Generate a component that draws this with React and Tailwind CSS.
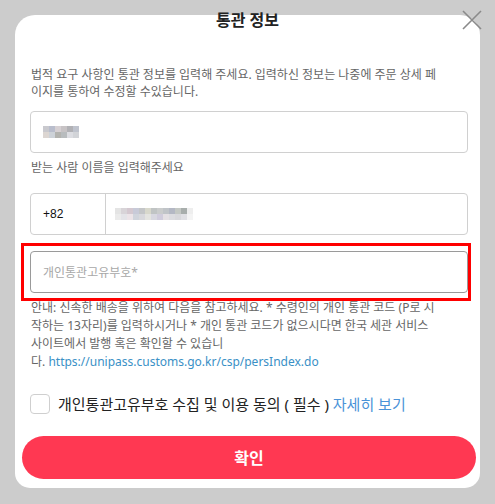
import React from 'react';

const nameBlur = [
  ['#c9c9ce', '#b9bdcc', '#d6d0d3', '#c7c3c5', '#b1b1b5', '#bfc3cd'],
  ['#dcd6d2', '#cdd2d8', '#b3b3af', '#b8bcbe', '#dcdde2', '#d2d4d8'],
];

const phoneBlur = [
  ['#e4e4e4', '#d8d4d8', '#d4c8d0', '#c8cad8', '#c4c6c8', '#d8d8cc', '#c0c4c4', '#cacccc', '#c0c4c8', '#b4b8c4', '#c4c8c4', '#a8aeac', '#eeeeee'],
  ['#ebebeb', '#e4e4e8', '#ece4e8', '#d0d4dc', '#d8d8dc', '#e4e4e0', '#d8d8e0', '#d0ccdc', '#e4e0e4', '#dcdce0', '#d8d8dc', '#e0e0e4', '#f4f4f4'],
];

function Blur({ rows }) {
  return (
    <div className="flex flex-col">
      {rows.map((row, i) => (
        <div key={i} className="flex">
          {row.map((c, j) => (
            <span key={j} className="block w-[6px] h-[6px]" style={{ backgroundColor: c }} />
          ))}
        </div>
      ))}
    </div>
  );
}

export default function App() {
  return (
    <div
      className="w-[495px] h-[504px] bg-[#cccccc] pt-[15px] pl-[15px] overflow-hidden"
      style={{ fontFamily: '"Noto Sans", "Noto Sans CJK KR", sans-serif' }}
    >
      <div className="relative w-[465px] h-[473px] bg-white rounded-t-[20px] rounded-b-[15px] flex flex-col">
        {/* Header */}
        <div className="-mt-[7px] h-6 leading-6 text-center text-[16px] font-bold text-[#222]">통관 정보</div>
        <button className="absolute -right-[2px] -top-[5px] w-5 h-5 text-[#8a8a8a]">
          <svg viewBox="0 0 20 20" className="w-5 h-5" fill="none" stroke="currentColor" strokeWidth="1.6">
            <path d="M1 1 L19 19 M19 1 L1 19" />
          </svg>
        </button>

        <div className="px-[15px] flex flex-col">
          <p className="mt-[34px] text-[12px] leading-[17px] text-[#666] pl-px">
            법적 요구 사항인 통관 정보를 입력해 주세요. 입력하신 정보는 나중에 주문 상세 페<br />
            이지를 통하여 수정할 수있습니다.
          </p>

          {/* Name */}
          <div className="mt-[11px] h-[42px] w-[438px] border border-[#d0d0d0] rounded-[4px] flex items-center pl-[12px]">
            <Blur rows={nameBlur} />
          </div>
          <p className="mt-[6px] text-[12px] leading-[17px] text-[#666] pl-px">받는 사람 이름을 입력해주세요</p>

          {/* Phone */}
          <div className="mt-[17px] h-[42px] w-[438px] border border-[#d0d0d0] rounded-[4px] flex">
            <div
              className="w-[75px] border-r border-[#d0d0d0] flex items-center pl-[12px] text-[12px] text-[#111]"
              style={{ fontFamily: '"Liberation Sans", sans-serif' }}
            >
              +82
            </div>
            <div className="flex-1 flex items-center pl-[9px]">
              <Blur rows={phoneBlur} />
            </div>
          </div>

          {/* Customs code */}
          <input
            className="mt-[16px] h-[42px] w-[438px] border border-[#9a9a9a] rounded-[4px] px-[12px] text-[12px] outline-none placeholder:text-[#a8a8a8]"
            placeholder="개인통관고유부호*"
          />
          <p className="mt-[6px] text-[12px] leading-[18px] text-[#666] pl-px">
            안내: 신속한 배송을 위하여 다음을 참고하세요. * 수령인의 개인 통관 코드 (P로 시<br />
            작하는 13자리)를 입력하시거나 * 개인 통관 코드가 없으시다면 한국 세관 서비스<br />
            사이트에서 발행 혹은 확인할 수 있습니<br />
            다. <span className="text-[#3a90c6]">https://unipass.customs.go.kr/csp/persIndex.do</span>
          </p>

          {/* Agreement */}
          <label className="mt-[23px] flex items-center h-5">
            <span className="w-5 h-5 border border-[#cfcfcf] rounded-[4px] bg-white" />
            <span className="ml-[8px] text-[15px] leading-5 text-[#222]">
              개인통관고유부호 수집 및 이용 동의 ( 필수 ) <span className="text-[#4a93d8]">자세히 보기</span>
            </span>
          </label>
        </div>

        <button className="mt-[22px] ml-[7px] w-[454px] h-[43px] rounded-full bg-[#ff3852] text-white text-[16px] font-bold">
          확인
        </button>

        {/* highlight annotation */}
        <div className="absolute left-[6px] top-[228px] w-[450px] h-[58px] border-[3px] border-[#ff0000] pointer-events-none" />
      </div>
    </div>
  );
}
